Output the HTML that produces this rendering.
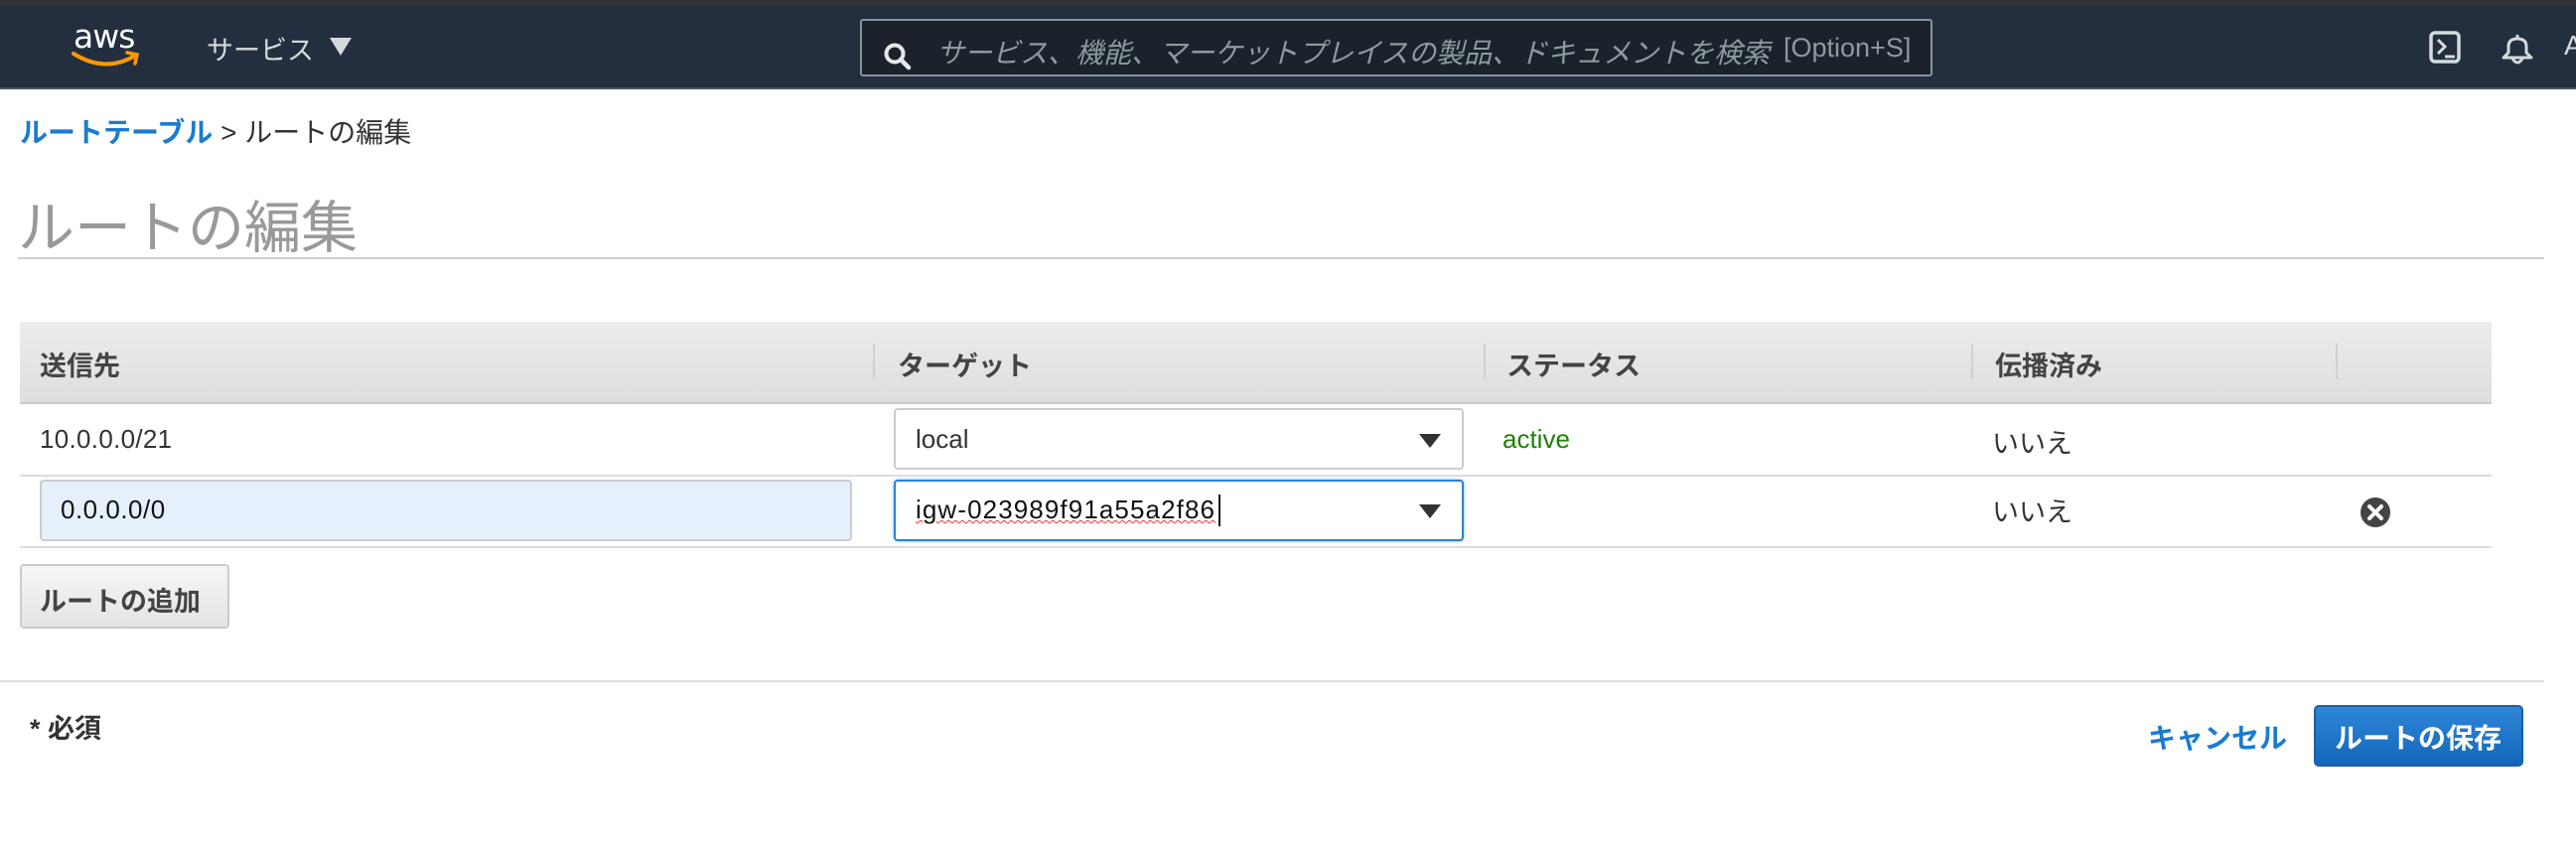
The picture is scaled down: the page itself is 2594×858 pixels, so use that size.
<!DOCTYPE html>
<html><head><meta charset="utf-8"><style>
*{margin:0;padding:0;box-sizing:border-box}
body{width:2594px;height:858px;background:#fff;position:relative;overflow:hidden;font-family:"Liberation Sans","Noto Sans CJK JP",sans-serif;color:#333}
.a{position:absolute;white-space:nowrap}
</style></head><body>
<div class="a" style="left:0;top:0;width:2594px;height:6px;background:#333438"></div>
<div class="a" style="left:0;top:6px;width:2594px;height:82px;background:#232f3e"></div>
<div class="a" style="left:0;top:88px;width:2594px;height:2px;background:#50585f"></div>
<div class="a" style="left:74px;top:17px;font-size:33px;color:#fff;letter-spacing:-1px;font-family:'DejaVu Sans',sans-serif">aws</div>
<svg class="a" style="left:72px;top:50px" width="70" height="20"><path d="M2 4 Q34 24 64 6" stroke="#f90" stroke-width="4" fill="none" stroke-linecap="round"/><path d="M56 3 L66 5 L64 14" stroke="#f90" stroke-width="3.5" fill="none" stroke-linecap="round"/></svg>
<div class="a" style="left:208px;top:29px;font-size:27px;color:#d5dbdb">サービス</div>
<svg class="a" style="left:332px;top:38px" width="22" height="18"><path d="M0 0H22L11 18Z" fill="#d5dbdb"/></svg>
<div class="a" style="left:866px;top:19px;width:1080px;height:58px;background:#1b222b;border:2px solid #879596;border-radius:3px;overflow:hidden">
<svg class="a" style="left:22px;top:22px" width="30" height="30"><circle cx="11" cy="11" r="8.5" stroke="#e6e9e9" stroke-width="4" fill="none"/><path d="M17 17L25 25" stroke="#e6e9e9" stroke-width="4.5" stroke-linecap="round"/></svg>
<div class="a" style="left:75px;top:11px;font-size:28px;color:#8d9b9c;font-style:italic;width:845px;overflow:hidden">サービス、機能、マーケットプレイスの製品、ドキュメントを検索</div>
<div class="a" style="left:928px;top:12px;font-size:27px;color:#8d9b9c">[Option+S]</div>
</div>
<svg class="a" style="left:2446px;top:31px" width="34" height="34"><rect x="2" y="2" width="28" height="29" rx="4" stroke="#d5dbdb" stroke-width="3.5" fill="none"/><path d="M9 9L16 16L9 23M16 26H26" stroke="#d5dbdb" stroke-width="3" fill="none"/></svg>
<svg class="a" style="left:2517px;top:31px" width="36" height="34"><path d="M18 4V8M9 22V16Q9 8 18 8Q27 8 27 16V22L32 27H4Z" stroke="#d5dbdb" stroke-width="3" fill="none" stroke-linejoin="round"/><path d="M13 28Q18 36 23 28" stroke="#d5dbdb" stroke-width="3" fill="none"/></svg>
<div class="a" style="left:2582px;top:30px;font-size:28px;color:#d5dbdb">A</div>

<div class="a" style="left:20px;top:112px;font-size:28px;color:#333"><span style="font-weight:bold;color:#1a7bd1">ルートテーブル</span> &gt; ルートの編集</div>
<div class="a" style="left:18px;top:184px;font-size:57px;color:#999">ルートの編集</div>
<div class="a" style="left:18px;top:259px;width:2544px;height:2px;background:#cfcfcf"></div>

<div class="a" style="left:20px;top:324px;width:2489px;height:83px;background:linear-gradient(#ececec,#dedede);border-bottom:2px solid #ccc"></div>
<div class="a" style="left:879px;top:346px;width:2px;height:36px;background:#d0d0d0"></div>
<div class="a" style="left:1494px;top:346px;width:2px;height:36px;background:#d0d0d0"></div>
<div class="a" style="left:1985px;top:346px;width:2px;height:36px;background:#d0d0d0"></div>
<div class="a" style="left:2352px;top:346px;width:2px;height:36px;background:#d0d0d0"></div>
<div class="a" style="left:40px;top:347px;font-size:27px;font-weight:bold;color:#444">送信先</div>
<div class="a" style="left:904px;top:347px;font-size:27px;font-weight:bold;color:#444">ターゲット</div>
<div class="a" style="left:1517px;top:347px;font-size:27px;font-weight:bold;color:#444">ステータス</div>
<div class="a" style="left:2009px;top:347px;font-size:27px;font-weight:bold;color:#444">伝播済み</div>

<div class="a" style="left:40px;top:427px;font-size:26px;color:#333;letter-spacing:0.3px">10.0.0.0/21</div>
<div class="a" style="left:900px;top:411px;width:574px;height:62px;border:2px solid #ccc;border-radius:4px;background:#fff"></div>
<div class="a" style="left:922px;top:427px;font-size:26px;color:#333">local</div>
<svg class="a" style="left:1429px;top:437px" width="22" height="14"><path d="M0 0H22L11 14Z" fill="#333"/></svg>
<div class="a" style="left:1513px;top:427px;font-size:26px;color:#1d8102">active</div>
<div class="a" style="left:2006px;top:425px;font-size:27px;color:#333">いいえ</div>
<div class="a" style="left:20px;top:478px;width:2489px;height:2px;background:#ddd"></div>

<div class="a" style="left:40px;top:483px;width:818px;height:62px;border:2px solid #ccc;border-radius:4px;background:#e6f0fd"></div>
<div class="a" style="left:61px;top:498px;font-size:26px;color:#111;letter-spacing:0.5px">0.0.0.0/0</div>
<div class="a" style="left:900px;top:483px;width:574px;height:62px;border:2px solid #2a83d8;border-radius:4px;background:#fff;box-shadow:0 0 3px #7ab6ef"></div>
<div class="a" style="left:922px;top:498px;font-size:26px;color:#111;letter-spacing:1.1px;text-decoration:underline wavy #e33;text-decoration-thickness:1px">igw-023989f91a55a2f86</div>
<div class="a" style="left:1227px;top:498px;width:2px;height:32px;background:#111"></div>
<svg class="a" style="left:1429px;top:508px" width="22" height="14"><path d="M0 0H22L11 14Z" fill="#333"/></svg>
<div class="a" style="left:2006px;top:494px;font-size:27px;color:#333">いいえ</div>
<svg class="a" style="left:2376px;top:500px" width="32" height="32"><circle cx="16" cy="16" r="15" fill="#444"/><path d="M10 10L22 22M22 10L10 22" stroke="#fff" stroke-width="4" stroke-linecap="round"/></svg>
<div class="a" style="left:20px;top:550px;width:2489px;height:2px;background:#ddd"></div>

<div class="a" style="left:20px;top:568px;width:211px;height:65px;border:2px solid #ccc;border-radius:4px;background:linear-gradient(#f6f6f6,#e4e4e4)"></div>
<div class="a" style="left:40px;top:584px;font-size:27px;font-weight:bold;color:#444">ルートの追加</div>

<div class="a" style="left:0;top:685px;width:2562px;height:2px;background:#ddd"></div>
<div class="a" style="left:30px;top:712px;font-size:27px;font-weight:bold;color:#333">* 必須</div>
<div class="a" style="left:2163px;top:722px;font-size:28px;font-weight:bold;color:#1a7bd1">キャンセル</div>
<div class="a" style="left:2330px;top:710px;width:211px;height:62px;border:2px solid #1a5fa5;border-radius:5px;background:linear-gradient(#2f86d6,#1267bb)"></div>
<div class="a" style="left:2351px;top:722px;font-size:28px;font-weight:bold;color:#fff">ルートの保存</div>
</body></html>
